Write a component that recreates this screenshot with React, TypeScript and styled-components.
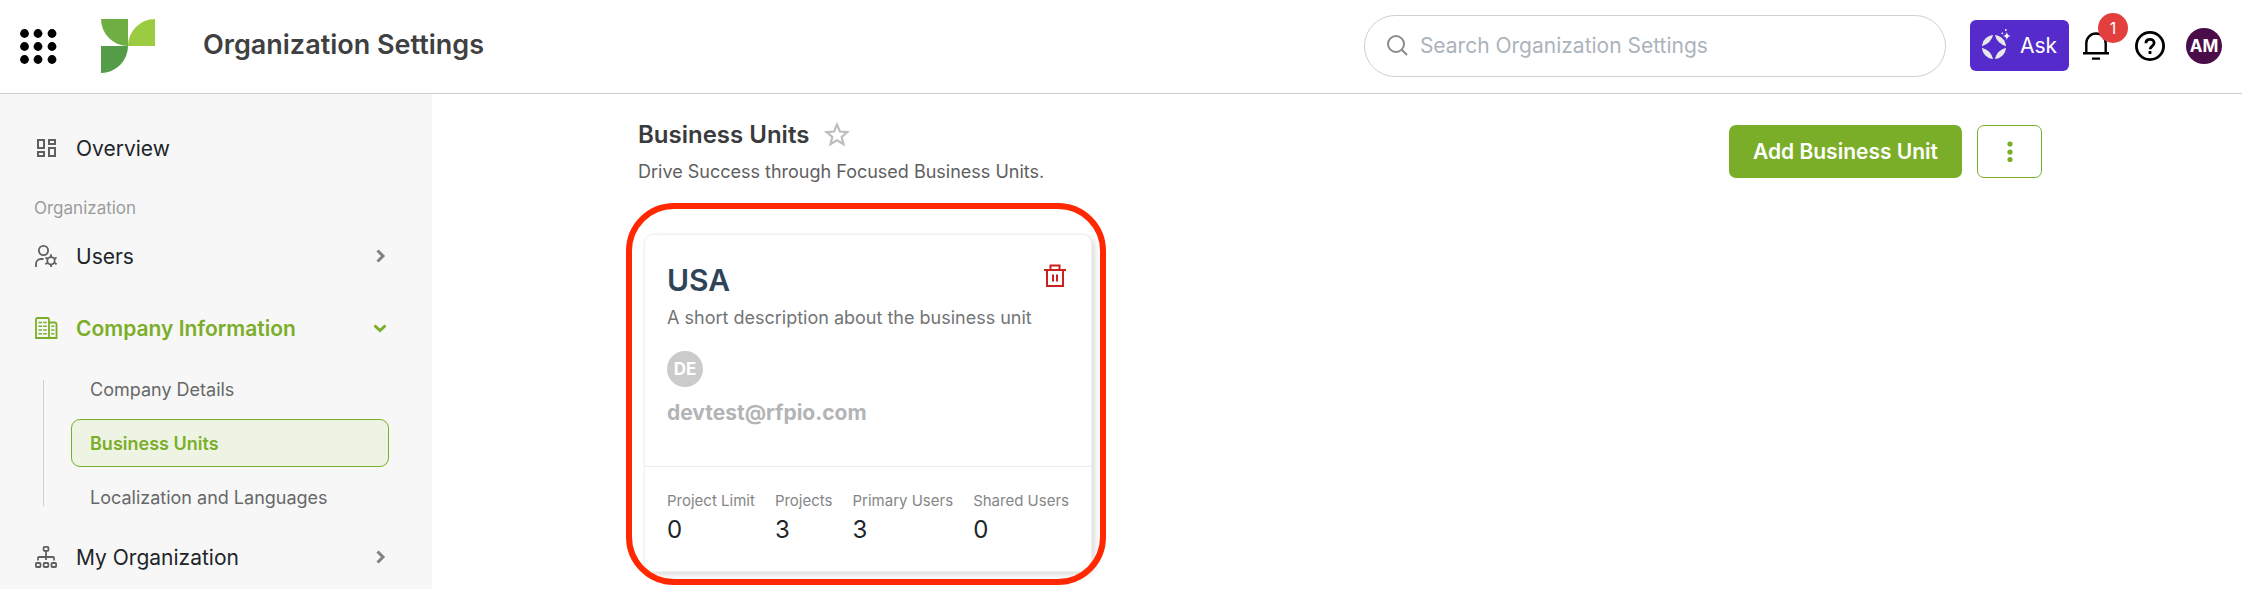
import React from "react";
import styled, { createGlobalStyle, css } from "styled-components";

const GREEN = "#7bae28";

const GlobalStyle = createGlobalStyle`
  *, *::before, *::after { box-sizing: border-box; }
  body {
    margin: 0;
    background: #fff;
    color: #212529;
    font-family: Inter, "Liberation Sans", sans-serif;
  }
  h1, h2, h3, p, dl, dt, dd, ul { margin: 0; padding: 0; }
  ul { list-style: none; }
  button, input { font-family: inherit; }
  button { cursor: pointer; }
  a { color: inherit; text-decoration: none; }
  svg { display: block; flex: none; }
`;

const Page = styled.div`
  display: flex;
  flex-direction: column;
  min-height: 100vh;
`;

const Header = styled.header`
  display: flex;
  align-items: center;
  height: 94px;
  padding: 0 20px 2px;
  border-bottom: 1px solid #cccdce;
`;

const IconButton = styled.button`
  display: flex;
  align-items: center;
  justify-content: center;
  padding: 0;
  border: 0;
  background: none;
`;

const LogoLink = styled.a`
  margin-left: 44px;
`;

const AppTitle = styled.h1`
  margin-left: 48px;
  padding-bottom: 2px;
  color: #3f4041;
  font-size: 27px;
  font-weight: 600;
  line-height: 36px;
  white-space: nowrap;
`;

const SearchBox = styled.label`
  display: flex;
  align-items: center;
  gap: 12px;
  width: 582px;
  height: 62px;
  margin-left: auto;
  padding: 0 22px;
  border: 1px solid #cfd0d1;
  border-radius: 31px;
`;

const SearchInput = styled.input`
  flex: 1;
  min-width: 0;
  padding: 0;
  border: 0;
  outline: 0;
  background: none;
  font-size: 21px;
  line-height: 28px;
  &::placeholder { color: #abb3bb; opacity: 1; }
`;

const AskButton = styled.button`
  display: flex;
  align-items: center;
  gap: 8px;
  height: 51px;
  margin-left: 24px;
  padding: 0 12px;
  border: 0;
  border-radius: 6px;
  background: #552bcb;
  color: #fff;
  font-size: 21px;
  font-weight: 400;
`;

const BellButton = styled(IconButton)`
  position: relative;
  margin-left: 14px;
`;

const Badge = styled.span`
  position: absolute;
  top: -19px;
  left: 15px;
  width: 30px;
  height: 30px;
  border-radius: 50%;
  background: #e23f3e;
  color: #fff;
  font-size: 16px;
  line-height: 30px;
  text-align: center;
`;

const HelpButton = styled(IconButton)`
  margin-left: 26px;
`;

const Avatar = styled.span<{ $color: string }>`
  display: flex;
  align-items: center;
  justify-content: center;
  width: 36px;
  height: 36px;
  border-radius: 50%;
  background: ${(p) => p.$color};
  color: #fff;
  font-size: 17px;
  font-weight: 700;
`;

const ProfileButton = styled(IconButton)`
  margin-left: 21px;
`;

const Body = styled.div`
  display: flex;
  flex: 1;
`;

const Sidebar = styled.nav`
  flex: none;
  width: 432px;
  padding: 30px 43px 0 34px;
  background: #f7f7f7;
`;

const NavLink = styled.a<{ $active?: boolean }>`
  display: flex;
  align-items: center;
  height: 48px;
  color: ${(p) => (p.$active ? GREEN : "#212529")};
  font-size: 21px;
  font-weight: ${(p) => (p.$active ? 600 : 400)};
`;

const NavIcon = styled.span<{ $active?: boolean }>`
  display: flex;
  justify-content: center;
  width: 24px;
  margin-right: 18px;
  color: ${(p) => (p.$active ? GREEN : "#5f6061")};
`;

const NavArrow = styled.span<{ $active?: boolean }>`
  display: flex;
  margin: 0 2px 0 auto;
  color: ${(p) => (p.$active ? GREEN : "#808182")};
`;

const NavHeading = styled.h2`
  margin: 24px 0 12px;
  color: #9b9c9d;
  font-size: 17px;
  font-weight: 400;
  line-height: 24px;
`;

const NavGroup = styled.div`
  display: flex;
  flex-direction: column;
  gap: 24px;
`;

const SubList = styled.ul`
  position: relative;
  display: flex;
  flex-direction: column;
  gap: 6px;
  margin: 13px 0 12px 37px;
  &::before {
    content: "";
    position: absolute;
    top: 15px;
    bottom: 15px;
    left: -28px;
    width: 1px;
    background: #cfcfcf;
  }
`;

const SubLink = styled.a<{ $active?: boolean }>`
  display: flex;
  align-items: center;
  height: 48px;
  padding: 0 18px;
  border: 1px solid transparent;
  border-radius: 9px;
  color: #676869;
  font-size: 18px;
  ${(p) =>
    p.$active &&
    css`
      border-color: ${GREEN};
      background: #eef4e4;
      color: ${GREEN};
      font-weight: 600;
    `}
`;

const Main = styled.main`
  flex: 1;
  min-width: 0;
  padding: 24px 200px 0 206px;
`;

const TitleBar = styled.div`
  display: flex;
  align-items: flex-start;
  justify-content: space-between;
`;

const TitleRow = styled.div`
  display: flex;
  align-items: center;
  gap: 15px;
`;

const PageTitle = styled.h2`
  color: #3a3b3c;
  font-size: 24px;
  font-weight: 600;
  line-height: 34px;
`;

const Subtitle = styled.p`
  margin-top: 8px;
  color: #5f6061;
  font-size: 18px;
  line-height: 24px;
`;

const Actions = styled.div`
  display: flex;
  gap: 15px;
  margin-top: 7px;
`;

const PrimaryButton = styled.button`
  height: 53px;
  padding: 0 24px;
  border: 0;
  border-radius: 7px;
  background: ${GREEN};
  color: #fff;
  font-size: 21px;
  font-weight: 600;
`;

const MenuButton = styled(IconButton)`
  width: 65px;
  height: 53px;
  border: 1px solid ${GREEN};
  border-radius: 7px;
  background: #fff;
  color: ${GREEN};
`;

const UnitCard = styled.article`
  position: relative;
  width: 448px;
  margin: 50px 0 17px 6px;
  border: 1px solid #f0f0f0;
  border-radius: 9px;
  box-shadow: 3px 3px 6px rgba(0, 0, 0, 0.14);
  &::after {
    content: "";
    position: absolute;
    inset: -32px -15px -14px -19px;
    border: 6px solid #ff2800;
    border-radius: 48px;
    pointer-events: none;
  }
`;

const CardBody = styled.div`
  height: 231px;
  padding: 25px 22px 0;
`;

const CardHead = styled.div`
  display: flex;
  align-items: flex-start;
  justify-content: space-between;
`;

const UnitName = styled.h3`
  color: #2f4557;
  font-size: 30px;
  font-weight: 600;
  line-height: 40px;
`;

const DeleteButton = styled(IconButton)`
  margin: 4px 3px 0 0;
`;

const UnitDescription = styled.p`
  margin: 6px 0 21px;
  color: #737475;
  font-size: 18px;
  line-height: 24px;
`;

const UnitEmail = styled.p`
  margin-top: 12px;
  color: #b3b4b5;
  font-size: 21px;
  font-weight: 700;
  line-height: 28px;
`;

const Stats = styled.dl`
  display: flex;
  justify-content: space-between;
  height: 105px;
  padding: 23px 22px 0;
  border-top: 1px solid #ececec;
`;

const StatLabel = styled.dt`
  color: #858687;
  font-size: 15px;
  line-height: 22px;
`;

const StatValue = styled.dd`
  margin-top: 2px;
  font-size: 24px;
  line-height: 32px;
`;

const GridIcon = () => (
  <svg width="37" height="36" viewBox="0 0 37 36" fill="#000">
    {[5.5, 18.5, 31.5].map((y) =>
      [4.5, 18, 32].map((x) => <circle key={`${x}-${y}`} cx={x} cy={y} r="4.4" />)
    )}
  </svg>
);

const Logo = () => (
  <svg width="54" height="54" viewBox="0 0 54 54">
    <path d="M0 0h27v27A27 27 0 0 1 0 0Z" fill="#6fae42" />
    <path d="M54 0v27H27A27 27 0 0 1 54 0Z" fill="#9bcb40" />
    <path d="M0 27h27A27 27 0 0 1 0 54Z" fill="#559c48" />
  </svg>
);

const SearchIcon = () => (
  <svg width="21" height="21" viewBox="0 0 21 21" fill="none" stroke="#8a8b8d" strokeWidth="2">
    <circle cx="9" cy="9" r="8" />
    <path d="M14.8 14.8 20 20" />
  </svg>
);

const SparkIcon = () => (
  <svg width="30" height="34" viewBox="0 0 30 34">
    <circle cx="12" cy="18" r="12" fill="#e8e8e8" />
    <path d="M12 5.500Q14.500 15.500 24.500 18Q14.500 20.500 12 30.500Q9.500 20.500 -.5 18Q9.500 15.500 12 5.500Z" fill="#552bcb" stroke="#552bcb" strokeWidth="1.200" />
    <path d="M24.800 2.500c.6 3 1.300 3.900 4.200 4.500-2.900.6-3.600 1.500-4.200 4.500-.6-3-1.300-3.900-4.200-4.500 2.900-.6 3.600-1.500 4.200-4.500Z" fill="#fff" stroke="#552bcb" strokeWidth=".3" />
    <circle cx="23.800" cy="1" r=".9" fill="#fff" />
    <circle cx="20.300" cy="4.300" r=".9" fill="#fff" />
  </svg>
);

const BellIcon = () => (
  <svg width="26" height="28" viewBox="0 0 26 28" fill="none" stroke="#000" strokeWidth="2.400">
    <path d="M0 21.300h26M3.300 21V11.200a9.700 9.700 0 0 1 19.400 0V21M9 26.600h8" />
  </svg>
);

const HelpIcon = () => (
  <svg width="30" height="30" viewBox="0 0 30 30" fill="none" stroke="#000" strokeWidth="2.800">
    <circle cx="15" cy="15" r="13.600" />
    <path d="M10.900 12.300c0-2.600 1.800-4 4.100-4s4.100 1.500 4.100 3.700c0 3-4 3.200-4 6.300" />
    <path d="M15 20v3" />
  </svg>
);

const DashboardIcon = () => (
  <svg width="19" height="18" viewBox="0 0 19 18" fill="none" stroke="currentColor" strokeWidth="2">
    <path d="M1 1h6v8H1zM12 1h6v4h-6zM1 13h6v4H1zM12 9h6v8h-6z" />
  </svg>
);

const UserGearIcon = () => (
  <svg width="22" height="22" viewBox="0 0 22 22" fill="none" stroke="currentColor" strokeWidth="1.800">
    <circle cx="8.500" cy="5.500" r="4.600" />
    <path d="M1 22v-3a5 5 0 0 1 5-5h2.500" />
    <circle cx="16" cy="15.800" r="3.700" />
    <path d="M16 12V9.300M16 22.200v-2.700M12.800 13.900l-2.400-1.400M21.600 19.100l-2.400-1.400M12.800 17.700l-2.400 1.400M21.600 12.500l-2.400 1.400" />
  </svg>
);

const BuildingIcon = () => (
  <svg width="23" height="22" viewBox="0 0 23 22" fill="none" stroke="currentColor" strokeWidth="1.800">
    <path d="M1 21V2.500Q1 1 2.500 1h10Q14 1 14 2.500V21ZM14 5.500h5.500Q21.500 5.500 21.500 7.500V21H14" />
    <path d="M3.500 5.500h8.500M3.500 9.200h8.500M3.500 13h8.500M3.500 16.800h8.500" strokeDasharray="3.500 1.200" strokeWidth="1.600" />
    <path d="M16.200 9.200h3.200M16.200 13h3.200M16.200 16.800h3.200" strokeWidth="1.600" />
  </svg>
);

const OrgChartIcon = () => (
  <svg width="22" height="22" viewBox="0 0 22 22" fill="none" stroke="currentColor" strokeWidth="1.800">
    <rect x="8.600" y=".9" width="4.800" height="4" rx=".8" />
    <rect x=".9" y="17" width="4.600" height="4" rx=".8" />
    <rect x="8.700" y="17" width="4.600" height="4" rx=".8" />
    <rect x="16.500" y="17" width="4.600" height="4" rx=".8" />
    <path d="M11 5v9M3 14.500V12q0-1 1-1h14q1 0 1 1v2.500" />
  </svg>
);

const ChevronRight = () => (
  <svg width="14" height="14" viewBox="0 0 14 14" fill="none" stroke="currentColor" strokeWidth="3">
    <path d="m4.500 1.500 5.500 5.500-5.500 5.500" />
  </svg>
);

const ChevronDown = () => (
  <svg width="14" height="14" viewBox="0 0 14 14" fill="none" stroke="currentColor" strokeWidth="3">
    <path d="m1.500 4.500 5.500 5 5.500-5" />
  </svg>
);

const StarIcon = () => (
  <svg width="26" height="26" viewBox="0 0 26 26" fill="none" stroke="#bdbdbd" strokeWidth="2.200">
    <path d="m13 2.600 2.900 6.900 7.500.6-5.700 4.900 1.800 7.300L13 18.400l-6.500 3.900L8.300 15 2.600 10.100l7.500-.6Z" />
  </svg>
);

const MoreIcon = () => (
  <svg width="6" height="22" viewBox="0 0 6 22" fill="currentColor">
    <circle cx="3" cy="3" r="2.600" />
    <circle cx="3" cy="11" r="2.600" />
    <circle cx="3" cy="18.500" r="2.600" />
  </svg>
);

const TrashIcon = () => (
  <svg width="22" height="23" viewBox="0 0 22 23" fill="none" stroke="#c9211e" strokeWidth="2">
    <path d="M0 6h22M3 6v16h16V6M6.500 6V1.500h9V6M9 10.500v7M13 10.500v7" />
  </svg>
);

const stats = [
  { label: "Project Limit", value: 0 },
  { label: "Projects", value: 3 },
  { label: "Primary Users", value: 3 },
  { label: "Shared Users", value: 0 },
];

const subPages = ["Company Details", "Business Units", "Localization and Languages"];

export default function App() {
  return (
    <Page>
      <GlobalStyle />
      <Header>
        <IconButton aria-label="Applications"><GridIcon /></IconButton>
        <LogoLink href="#" aria-label="Home"><Logo /></LogoLink>
        <AppTitle>Organization Settings</AppTitle>
        <SearchBox>
          <SearchIcon />
          <SearchInput type="text" aria-label="Search Organization Settings" placeholder="Search Organization Settings" />
        </SearchBox>
        <AskButton><SparkIcon />Ask</AskButton>
        <BellButton aria-label="Notifications">
          <BellIcon />
          <Badge>1</Badge>
        </BellButton>
        <HelpButton aria-label="Help"><HelpIcon /></HelpButton>
        <ProfileButton aria-label="Profile"><Avatar $color="#4a0d48">AM</Avatar></ProfileButton>
      </Header>
      <Body>
        <Sidebar>
          <NavLink href="#">
            <NavIcon><DashboardIcon /></NavIcon>
            Overview
          </NavLink>
          <NavHeading>Organization</NavHeading>
          <NavGroup>
            <NavLink href="#">
              <NavIcon><UserGearIcon /></NavIcon>
              Users
              <NavArrow><ChevronRight /></NavArrow>
            </NavLink>
            <NavLink href="#" $active>
              <NavIcon $active><BuildingIcon /></NavIcon>
              Company Information
              <NavArrow $active><ChevronDown /></NavArrow>
            </NavLink>
          </NavGroup>
          <SubList>
            {subPages.map((name) => (
              <li key={name}>
                <SubLink href="#" $active={name === "Business Units"}>{name}</SubLink>
              </li>
            ))}
          </SubList>
          <NavLink href="#">
            <NavIcon><OrgChartIcon /></NavIcon>
            My Organization
            <NavArrow><ChevronRight /></NavArrow>
          </NavLink>
        </Sidebar>
        <Main>
          <TitleBar>
            <div>
              <TitleRow>
                <PageTitle>Business Units</PageTitle>
                <IconButton aria-label="Add to favorites"><StarIcon /></IconButton>
              </TitleRow>
              <Subtitle>Drive Success through Focused Business Units.</Subtitle>
            </div>
            <Actions>
              <PrimaryButton>Add Business Unit</PrimaryButton>
              <MenuButton aria-label="More actions"><MoreIcon /></MenuButton>
            </Actions>
          </TitleBar>
          <UnitCard>
            <CardBody>
              <CardHead>
                <UnitName>USA</UnitName>
                <DeleteButton aria-label="Delete business unit"><TrashIcon /></DeleteButton>
              </CardHead>
              <UnitDescription>A short description about the business unit</UnitDescription>
              <Avatar $color="#cbcbcb">DE</Avatar>
              <UnitEmail>devtest@rfpio.com</UnitEmail>
            </CardBody>
            <Stats>
              {stats.map((s) => (
                <div key={s.label}>
                  <StatLabel>{s.label}</StatLabel>
                  <StatValue>{s.value}</StatValue>
                </div>
              ))}
            </Stats>
          </UnitCard>
        </Main>
      </Body>
    </Page>
  );
}
